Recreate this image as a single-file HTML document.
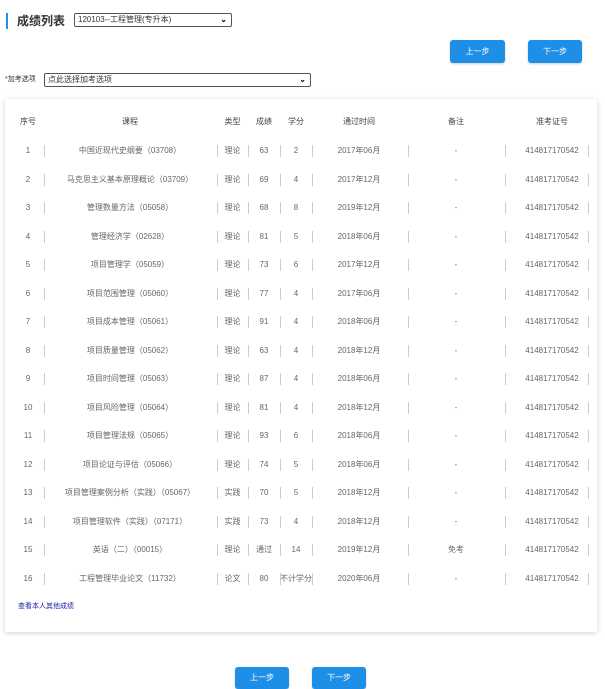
<!DOCTYPE html>
<html><head><meta charset="utf-8"><style>
body{margin:0;width:605px;height:687px;background:#fff;font-family:"Liberation Sans","Noto Sans CJK SC",sans-serif;position:relative;overflow:hidden;color:#666}
.a{position:absolute}
.title{left:6px;top:13px;border-left:2px solid #2a8ee6;height:16px;padding-left:9px;font-size:12px;font-weight:bold;line-height:16px;color:#333}
.sel{border:1px solid #555;border-radius:2px;background:#fff;font-size:8px;color:#333;line-height:12px;padding-left:3px;box-sizing:border-box}
.sel b{position:absolute;right:4px;top:0;font-size:8px;color:#000}
.btn{background:#1e8fe6;color:#fff;border-radius:3px;font-size:8px;text-align:center;box-shadow:0 1px 2px rgba(0,0,0,.2)}
.card{left:5px;top:99px;width:592px;height:533px;background:#fff;box-shadow:0 1px 5px rgba(0,0,0,.18)}
.r{position:absolute;left:0;width:605px;height:12px;font-size:8px;line-height:12px}
.r span{position:absolute;top:0;text-align:center}
.s{position:absolute;top:0;width:1px;height:12px;background:#ccc}
</style></head><body>
<div class="a title">成绩列表</div>
<div class="a sel" style="left:74px;top:13px;width:158px;height:14px">120103--工程管理(专升本)<b>⌄</b></div>
<div class="a btn" style="left:450px;top:40px;width:55px;height:23px;line-height:23px">上一步</div>
<div class="a btn" style="left:528px;top:40px;width:54px;height:23px;line-height:23px">下一步</div>
<div class="a" style="left:5px;top:75px;font-size:7px;color:#333;line-height:10px">*加考选项</div>
<div class="a sel" style="left:44px;top:73px;width:267px;height:14px">点此选择加考选项<b>⌄</b></div>
<div class="a card"></div>
<div id="t"></div>
<div class="a" style="left:18px;top:601px;font-size:7px;color:#1a1aa0">查看本人其他成绩</div>
<div class="a btn" style="left:235px;top:667px;width:54px;height:22px;line-height:22px">上一步</div>
<div class="a btn" style="left:312px;top:667px;width:54px;height:22px;line-height:22px">下一步</div>
<script>
var d=[["中国近现代史纲要（03708）","理论","63","2","2017年06月","-"],
["马克思主义基本原理概论（03709）","理论","69","4","2017年12月","-"],
["管理数量方法（05058）","理论","68","8","2019年12月","-"],
["管理经济学（02628）","理论","81","5","2018年06月","-"],
["项目管理学（05059）","理论","73","6","2017年12月","-"],
["项目范围管理（05060）","理论","77","4","2017年06月","-"],
["项目成本管理（05061）","理论","91","4","2018年06月","-"],
["项目质量管理（05062）","理论","63","4","2018年12月","-"],
["项目时间管理（05063）","理论","87","4","2018年06月","-"],
["项目风险管理（05064）","理论","81","4","2018年12月","-"],
["项目管理法规（05065）","理论","93","6","2018年06月","-"],
["项目论证与评估（05066）","理论","74","5","2018年06月","-"],
["项目管理案例分析（实践）（05067）","实践","70","5","2018年12月","-"],
["项目管理软件（实践）（07171）","实践","73","4","2018年12月","-"],
["英语（二）（00015）","理论","通过","14","2019年12月","免考"],
["工程管理毕业论文（11732）","论文","80","不计学分","2020年06月","-"]];
var cols=[[12,32],[44,172],[217,31],[248,32],[280,32],[312,94],[406,100],[514,76]];
function row(y,v,sep,c){var h='<div class="r" style="top:'+y+'px'+(c?';color:'+c:'')+'">';
for(var i=0;i<8;i++)h+='<span style="left:'+cols[i][0]+'px;width:'+cols[i][1]+'px">'+v[i]+'</span>';
if(sep)[44,217,248,280,312,408,505,588].forEach(function(x){h+='<div class="s" style="left:'+x+'px"></div>'});
return h+'</div>';}
var h=row(116,["序号","课程","类型","成绩","学分","通过时间","备注","准考证号"],0,'#444');
d.forEach(function(r,i){h+=row(Math.round(145+i*28.53),[i+1].concat(r).concat(["414817170542"]),1)});
document.getElementById('t').innerHTML=h;
</script>
</body></html>
